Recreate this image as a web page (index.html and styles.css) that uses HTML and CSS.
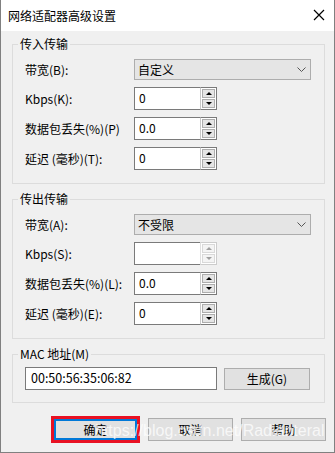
FILE: index.html
```html
<!DOCTYPE html>
<html lang="zh-CN">
<head>
    <meta charset="UTF-8">
    <meta name="viewport" content="width=device-width, initial-scale=1.0">
    <title>网络适配器高级设置</title>
    <link rel="stylesheet" href="styles.css">
</head>
<body>
    <div class="window">
        <div class="titlebar">
            <span class="title">网络适配器高级设置</span>
        </div>
        <svg class="close-icon" width="12" height="12" viewBox="0 0 12 12">
            <path d="M1 1 L11 11 M11 1 L1 11" stroke="#000000" stroke-width="1.2" fill="none"/>
        </svg>

        <fieldset class="group first">
            <legend>传入传输</legend>
            <div class="row">
                <label>带宽(B):</label>
                <div class="combo">
                    <span>自定义</span>
                    <svg class="chevron" viewBox="0 0 9 5"><polyline points="0.5,0.5 4.5,4.5 8.5,0.5" stroke="#555" fill="none"/></svg>
                </div>
            </div>
            <div class="row">
                <label>Kbps(K):</label>
                <div class="spin">
                    <div class="edit">0</div>
                    <div class="arrows"><span class="up"></span><span class="down"></span></div>
                </div>
            </div>
            <div class="row">
                <label>数据包丢失(%)(P)</label>
                <div class="spin">
                    <div class="edit">0.0</div>
                    <div class="arrows"><span class="up"></span><span class="down"></span></div>
                </div>
            </div>
            <div class="row">
                <label>延迟 (毫秒)(T):</label>
                <div class="spin">
                    <div class="edit">0</div>
                    <div class="arrows"><span class="up"></span><span class="down"></span></div>
                </div>
            </div>
        </fieldset>

        <fieldset class="group">
            <legend>传出传输</legend>
            <div class="row">
                <label>带宽(A):</label>
                <div class="combo">
                    <span>不受限</span>
                    <svg class="chevron" viewBox="0 0 9 5"><polyline points="0.5,0.5 4.5,4.5 8.5,0.5" stroke="#555" fill="none"/></svg>
                </div>
            </div>
            <div class="row">
                <label>Kbps(S):</label>
                <div class="spin disabled">
                    <div class="edit"></div>
                    <div class="arrows"><span class="up"></span><span class="down"></span></div>
                </div>
            </div>
            <div class="row">
                <label>数据包丢失(%)(L):</label>
                <div class="spin">
                    <div class="edit">0.0</div>
                    <div class="arrows"><span class="up"></span><span class="down"></span></div>
                </div>
            </div>
            <div class="row">
                <label>延迟 (毫秒)(E):</label>
                <div class="spin">
                    <div class="edit">0</div>
                    <div class="arrows"><span class="up"></span><span class="down"></span></div>
                </div>
            </div>
        </fieldset>

        <fieldset class="group mac">
            <legend>MAC 地址(M)</legend>
            <div class="mac-row">
                <div class="mac-edit">00:50:56:35:06:82</div>
                <div class="button gen">生成(G)</div>
            </div>
        </fieldset>

        <div class="footer">
            <div class="button ok">确定</div>
            <div class="button">取消</div>
            <div class="button">帮助</div>
        </div>

        <div class="watermark">https://blog.csdn.net/Radianteral</div>
    </div>
</body>
</html>
```

FILE: styles.css
```css
body {
    margin: 0;
    font-family: "Noto Sans CJK SC", "Noto Sans", sans-serif;
    font-size: 12px;
    color: #000;
    background-color: #f0f0f0;
}

.window {
    position: relative;
    width: 335px;
    height: 453px;
    box-sizing: border-box;
    background-color: #f0f0f0;
    border: 1px solid #808080;
    border-top: none;
    overflow: hidden;
}

.titlebar {
    height: 31px;
    box-sizing: border-box;
    background-color: #fff;
    display: flex;
    align-items: center;
    padding: 0 8px 0 7px;
}
.title {
    font-size: 12px;
}

/* the caption button sits on top of the title bar */
.close-icon {
    position: absolute;
    top: 9px;
    right: 9px;
    display: block;
    z-index: 2;
}

/* group boxes */
.group {
    width: 313px;
    box-sizing: border-box;
    margin: 7px 0 0 11px;
    padding: 7px 0 13px 5px;
    border: 1px solid #dcdcdc;
}
.group.first {
    margin-top: 5px;
}
.group legend {
    padding: 0 2px;
    line-height: 16px;
    height: 16px;
}
.group.mac {
    padding-top: 5px;
    padding-bottom: 12px;
}

.row {
    display: flex;
    align-items: center;
    padding-left: 7px;
    margin-top: 7px;
}
.row:first-of-type {
    margin-top: 0;
}
.row label {
    width: 109px;
    white-space: nowrap;
}

.combo {
    width: 177px;
    height: 21px;
    box-sizing: border-box;
    background-color: #e5e5e5;
    border: 1px solid #adadad;
    display: flex;
    align-items: center;
    justify-content: space-between;
    padding: 0 4px 0 3px;
}
.chevron {
    display: block;
    width: 9px;
    height: 5px;
}

.spin {
    display: flex;
    width: 83px;
    height: 23px;
}
.spin .edit {
    flex: 1;
    background-color: #fff;
    border: 1px solid #7a7a7a;
    border-right: none;
    padding: 0 4px;
    line-height: 19px;
}
.spin .arrows {
    width: 17px;
    box-sizing: border-box;
    display: flex;
    flex-direction: column;
    gap: 1px;
    padding: 1px;
    background-color: #fff;
    border: 1px solid #7a7a7a;
    border-left: 1px solid #c8c8c8;
}
.arrows span {
    flex: 1;
    background-color: #e5e5e5;
    border: 1px solid #adadad;
    display: flex;
    align-items: center;
    justify-content: center;
}
.arrows .up::after {
    content: "";
    border-left: 3px solid transparent;
    border-right: 3px solid transparent;
    border-bottom: 3px solid #000;
}
.arrows .down::after {
    content: "";
    border-left: 3px solid transparent;
    border-right: 3px solid transparent;
    border-top: 3px solid #000;
}
.spin.disabled .arrows {
    border-color: #cccccc;
    border-left-color: #e0e0e0;
}
.spin.disabled .arrows span {
    background-color: #f4f4f4;
    border-color: #d9d9d9;
}
.spin.disabled .up::after {
    border-bottom-color: #a0a0a0;
}
.spin.disabled .down::after {
    border-top-color: #a0a0a0;
}

.mac-row {
    display: flex;
    align-items: center;
    padding-left: 7px;
}
.mac-edit {
    width: 192px;
    height: 23px;
    box-sizing: border-box;
    background-color: #fff;
    border: 1px solid #7a7a7a;
    padding: 0 5px;
    line-height: 20px;
    font-size: 12.5px;
}

.button {
    height: 23px;
    box-sizing: border-box;
    width: 85px;
    background-color: #e1e1e1;
    border: 1px solid #adadad;
    display: flex;
    align-items: center;
    justify-content: center;
}
.button.gen {
    width: 86px;
    height: 22px;
    margin-left: 7px;
}

.footer {
    display: flex;
    justify-content: flex-end;
    align-items: center;
    gap: 8px;
    margin-top: 15px;
    padding-right: 8px;
    height: 23px;
}
.button.ok {
    width: 83px;
    height: 21px;
    border: 2px solid #0078d7;
    outline: 3px solid #e81123;
    margin-right: 3px;
}

.watermark {
    position: absolute;
    left: 94px;
    top: 422px;
    font-family: "Liberation Sans", Arial, sans-serif;
    font-size: 16px;
    line-height: 18px;
    color: rgba(255, 255, 255, 0.75);
    white-space: nowrap;
}
```
